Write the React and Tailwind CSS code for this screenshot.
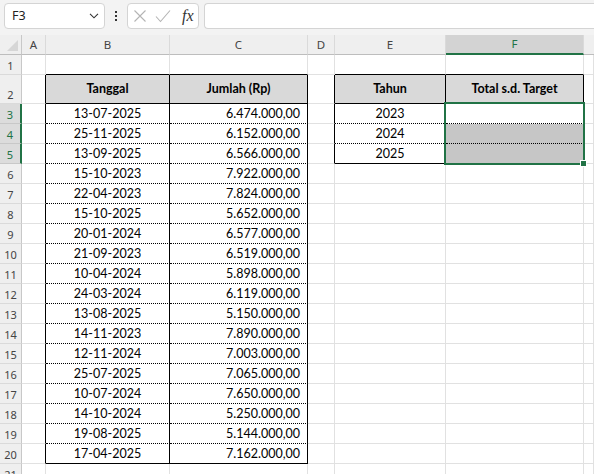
import React from "react";

const DATA = [
  ["13-07-2025", "6.474.000,00"],
  ["25-11-2025", "6.152.000,00"],
  ["13-09-2025", "6.566.000,00"],
  ["15-10-2023", "7.922.000,00"],
  ["22-04-2023", "7.824.000,00"],
  ["15-10-2025", "5.652.000,00"],
  ["20-01-2024", "6.577.000,00"],
  ["21-09-2023", "6.519.000,00"],
  ["10-04-2024", "5.898.000,00"],
  ["24-03-2024", "6.119.000,00"],
  ["13-08-2025", "5.150.000,00"],
  ["14-11-2023", "7.890.000,00"],
  ["12-11-2024", "7.003.000,00"],
  ["25-07-2025", "7.065.000,00"],
  ["10-07-2024", "7.650.000,00"],
  ["14-10-2024", "5.250.000,00"],
  ["19-08-2025", "5.144.000,00"],
  ["17-04-2025", "7.162.000,00"],
];
const YEARS = { 3: "2023", 4: "2024", 5: "2025" };
const LETTERS = ["", "A", "B", "C", "D", "E", "F", ""];

function rightCls(r, c) {
  if ((r >= 2 && r <= 20 && c >= 1 && c <= 3) || (r >= 2 && r <= 5 && c >= 4 && c <= 6))
    return "border-r-black";
  return "border-r-[#e1e1e1]";
}

function bottomCls(r, c) {
  const bc = c === 2 || c === 3;
  const ef = c === 5 || c === 6;
  if (((r === 1 || r === 2) && (bc || ef)) || (r === 20 && bc) || (r === 5 && ef)) return "border-b-black";
  if ((r >= 3 && r <= 19 && bc) || ((r === 3 || r === 4) && ef)) return "border-b-black [border-bottom-style:dotted]";
  return "border-b-[#e1e1e1]";
}

function Cell({ r, c }) {
  let content = null;
  let extra = "";
  const headerRow = r === 2 && (c === 2 || c === 3 || c === 5 || c === 6);
  if (headerRow) {
    extra = "bg-[#d9d9d9] font-bold justify-center pt-[1px]";
    content = { 2: "Tanggal", 3: "Jumlah (Rp)", 5: "Tahun", 6: "Total s.d. Target" }[c];
  } else if (r >= 3 && r <= 20 && c === 2) {
    extra = "justify-center pt-[2px]";
    content = DATA[r - 3][0];
  } else if (r >= 3 && r <= 20 && c === 3) {
    extra = "justify-end pr-[7px] pt-[2px]";
    content = DATA[r - 3][1];
  } else if (c === 5 && YEARS[r]) {
    extra = "justify-center pt-[2px]";
    content = YEARS[r];
  }
  if (c === 6 && (r === 4 || r === 5)) extra += " bg-[#c6c6c6]";
  const sel = c === 6 && r === 3;
  return (
    <div
      className={`flex items-center border-r border-b whitespace-nowrap overflow-visible ${rightCls(r, c)} ${bottomCls(r, c)} ${extra} ${sel ? "relative" : ""}`}
    >
      {content}
      {sel && (
        <div className="absolute -left-[2px] -top-[2px] w-[141px] h-[63px] border-2 border-[#217346] z-10">
          <div className="absolute -right-[4px] -bottom-[4px] w-[7px] h-[7px] bg-[#217346] border border-white" />
        </div>
      )}
    </div>
  );
}

function RowHeader({ r }) {
  const sel = r >= 3 && r <= 5;
  return (
    <div
      className={`flex items-end justify-center pb-[3px] text-[11px] leading-none font-['Noto_Sans',sans-serif] border-b ${
        sel
          ? "bg-[#dcdcdc] border-b-[#c8c8c8] border-r-2 border-r-[#217346] text-[#217346]"
          : "bg-[#efefef] border-b-[#dadada] border-r border-r-[#c8c8c8] text-[#444]"
      }`}
    >
      {r}
    </div>
  );
}

function ColHeader({ c }) {
  if (c === 0) {
    return (
      <div className="relative bg-[#efefef] border-r border-b border-r-[#c8c8c8] border-b-[#bdbdbd]">
        <svg className="absolute right-[3px] bottom-[3px]" width="11" height="11" viewBox="0 0 11 11">
          <polygon points="11,0 11,11 0,11" fill="#d6d6d6" />
        </svg>
      </div>
    );
  }
  if (c === 6) {
    return (
      <div className="flex items-center justify-center bg-[#d3d3d3] border-r border-r-[#dadada] border-b-2 border-b-[#217346] text-[#217346] text-[11.5px] font-['Noto_Sans',sans-serif]">
        F
      </div>
    );
  }
  return (
    <div
      className={`flex items-center justify-center bg-[#efefef] border-b border-b-[#bdbdbd] text-[#444] text-[11.5px] font-['Noto_Sans',sans-serif] ${
        c === 7 ? "" : "border-r border-r-[#dadada]"
      }`}
    >
      {LETTERS[c]}
    </div>
  );
}

export default function App() {
  const cells = [];
  for (let c = 0; c < 8; c++) cells.push(<ColHeader key={`h${c}`} c={c} />);
  for (let r = 1; r <= 21; r++) {
    cells.push(<RowHeader key={`r${r}`} r={r} />);
    for (let c = 1; c < 8; c++) cells.push(<Cell key={`${r}-${c}`} r={r} c={c} />);
  }
  return (
    <div className="w-[594px] h-[474px] overflow-hidden bg-white font-['Lato',sans-serif] text-[12.5px] text-black">
      <div className="h-[35px] bg-[#f3f3f3] flex items-start pt-[3px] pl-[4px]">
        <div className="w-[101px] h-[26px] bg-white border border-[#d4d4d4] rounded-[4px] flex items-center justify-between pl-[7px] pr-[5px] font-['Noto_Sans',sans-serif] text-[12.5px] text-[#222]">
          <span>F3</span>
          <svg width="10" height="6" viewBox="0 0 10 6" fill="none" stroke="#333" strokeWidth="1.1">
            <path d="M1 0.8 L5 4.8 L9 0.8" />
          </svg>
        </div>
        <div className="w-[22px] h-[26px] flex flex-col items-center justify-center gap-[2px]">
          <div className="w-[2px] h-[2px] bg-[#333]" />
          <div className="w-[2px] h-[2px] bg-[#333]" />
          <div className="w-[2px] h-[2px] bg-[#333]" />
        </div>
        <div className="w-[72px] h-[26px] bg-white border border-[#d4d4d4] rounded-[4px] flex items-center pl-[5px]">
          <svg width="14" height="14" viewBox="0 0 14 14" fill="none" stroke="#b4b4b4" strokeWidth="1.1">
            <path d="M1.5 1.5 L12.5 12.5 M12.5 1.5 L1.5 12.5" />
          </svg>
          <svg className="ml-[8px]" width="16" height="14" viewBox="0 0 16 14" fill="none" stroke="#b4b4b4" strokeWidth="1.1">
            <path d="M1 7.5 L5.5 12.5 L15 1.5" />
          </svg>
          <span className="ml-[11px] font-['Liberation_Serif',serif] italic text-[16px] text-[#333] leading-none">fx</span>
        </div>
        <div className="ml-[5px] flex-1 h-[26px] bg-white border border-[#d4d4d4] border-r-0 rounded-l-[4px]" />
      </div>
      <div className="grid grid-cols-[22px_24px_124px_138px_27px_111px_138px_1fr] grid-rows-[20px_20px_29px_repeat(19,20px)]">
        {cells}
      </div>
    </div>
  );
}
